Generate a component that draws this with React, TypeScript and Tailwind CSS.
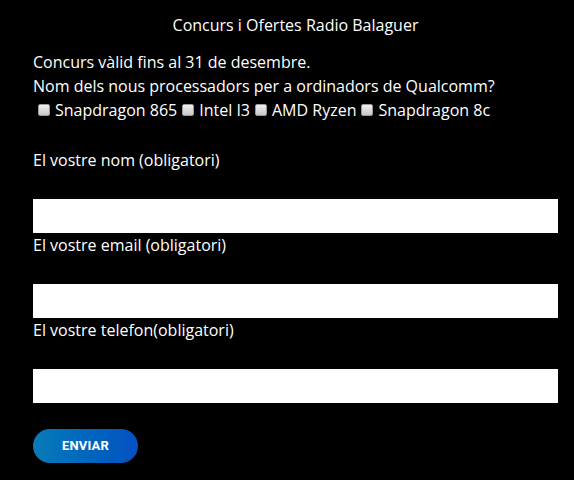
import React from 'react'

const options = ['Snapdragon 865', 'Intel I3', 'AMD Ryzen', 'Snapdragon 8c']
const fields = ['El vostre nom (obligatori)', 'El vostre email (obligatori)', 'El vostre telefon(obligatori)']

function Box() {
  return (
    <span className="inline-block w-[12px] h-[12px] mx-[5px] rounded-[2px] border border-[#9a9a9a] bg-gradient-to-b from-[#f0f0f0] to-[#c8c8c8] align-[-1px]" />
  )
}

export default function App() {
  return (
    <div className="min-h-[480px] bg-black text-white font-['Open_Sans',sans-serif] text-[16px] leading-[24px]">
      <div className="ml-[33px] mr-[16px] pt-[13px]">
        <h1 className="text-center text-[16px] leading-[24px] font-normal">Concurs i Ofertes Radio Balaguer</h1>

        <p className="mt-[13px]">Concurs vàlid fins al 31 de desembre.</p>
        <p>Nom dels nous processadors per a ordinadors de Qualcomm?</p>
        <div className="flex items-center">
          {options.map(o => (
            <label key={o} className="flex items-center">
              <Box />
              <span>{o}</span>
            </label>
          ))}
        </div>

        <div className="mt-[26px] flex flex-col">
          {fields.map(f => (
            <div key={f} className="flex flex-col">
              <label>{f}</label>
              <input type="text" className="mt-[27px] h-[34px] w-full bg-white text-black outline-none px-2" />
            </div>
          ))}
        </div>

        <button className="mt-[26px] h-[34px] w-[105px] rounded-full bg-gradient-to-r from-[#0a7bb8] to-[#0650c2] text-white font-['Roboto',sans-serif] font-bold text-[13px] tracking-[0.2px]">
          ENVIAR
        </button>
      </div>
    </div>
  )
}
